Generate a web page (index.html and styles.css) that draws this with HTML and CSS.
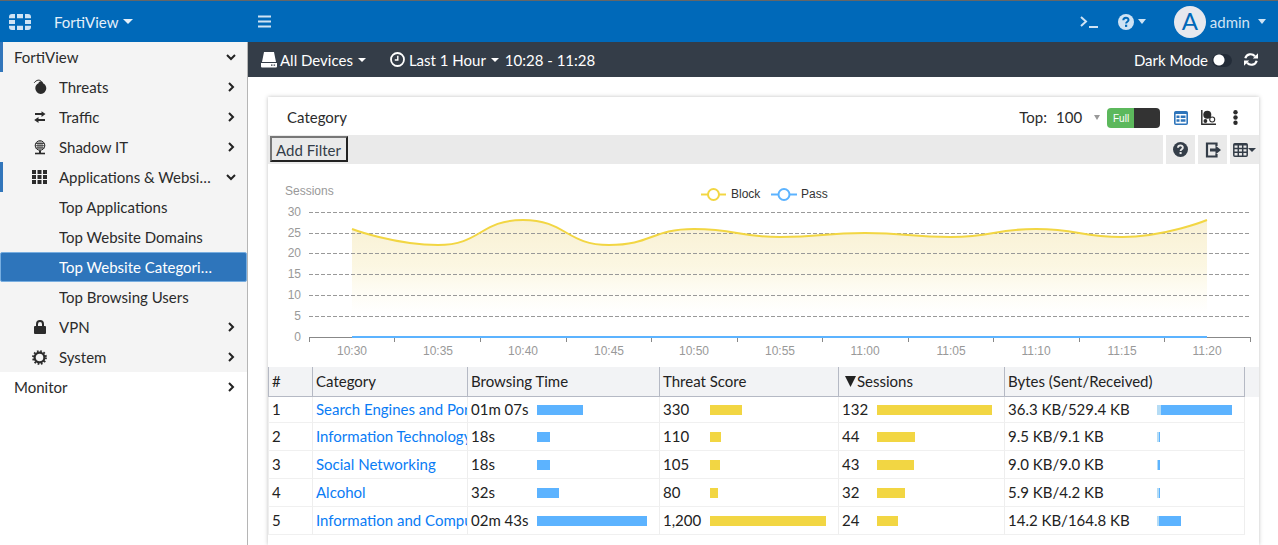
FILE: index.html
```html
<!DOCTYPE html>
<html lang="en">
<head>
<meta charset="utf-8">
<meta name="viewport" content="width=device-width, initial-scale=1">
<title>FortiView - Top Website Categories</title>
<link rel="stylesheet" href="styles.css">
</head>
<body>
<header class="topbar">
  <div class="brand">
    <svg class="logo" width="22" height="16" viewBox="0 0 22 16" fill="currentColor"><path d="M0 4.200V3a3 3 0 0 1 3-3h3v4.200zM8 0h6v4.200H8zM16 0h3a3 3 0 0 1 3 3v1.200h-6zM0 6h6v4H0zM16 6h6v4h-6zM0 11.800h6V16H3a3 3 0 0 1-3-3zM8 11.800h6V16H8zM16 11.800h6V13a3 3 0 0 1-3 3h-3z"/></svg>
    <button class="plain brand-name" type="button">FortiView <span class="caret"></span></button>
  </div>
  <button class="plain menu-toggle" type="button" aria-label="Toggle menu">
    <svg width="13" height="13" viewBox="0 0 13 13" stroke="currentColor" stroke-width="2"><path d="M0 1.500h13M0 6.500h13M0 11.500h13"/></svg>
  </button>
  <div class="top-actions">
    <button class="plain console" type="button" aria-label="Console">
      <svg width="18" height="14" viewBox="0 0 18 14" fill="none" stroke="currentColor" stroke-width="2"><path d="M1 2l5 4.500L1 11M9 12h9"/></svg>
    </button>
    <button class="plain help" type="button" aria-label="Help">
      <svg width="16" height="16" viewBox="0 0 16 16"><circle cx="8" cy="8" r="8" fill="currentColor"/><path d="M5.300 6.200C5.400 2.700 10.600 2.900 10.500 6c0 1.700-2.400 1.700-2.400 3.500" fill="none" stroke="#0069b9" stroke-width="2"/><path d="M7 10.700h2.200v2.200H7z" fill="#0069b9"/></svg>
      <span class="caret"></span>
    </button>
    <button class="plain user" type="button"><span class="avatar">A</span>admin <span class="caret"></span></button>
  </div>
</header>

<div class="shell">
  <nav class="sidebar">
    <div class="group">
      <a class="item root open" href="#"><span class="label">FortiView</span><svg class="chev" viewBox="0 0 10 10"><path d="M1 3l4 4 4-4"/></svg></a>
      <a class="item" href="#"><span class="icon"><svg width="14" height="16" viewBox="0 0 14 16"><path d="M8 2.200c1.500 0 2 1 2 2 2 .9 3.300 2.800 3.300 5A5.500 5.700 0 0 1 2.300 9.200c0-2.200 1.300-4 3.200-4.900 0-1 1-2.100 2.500-2.100z" fill="currentColor"/><path d="M8.500 2.500C6.500.3 3.500.8 1.200 3.800" fill="none" stroke="currentColor"/></svg></span><span class="label">Threats</span><svg class="chev" viewBox="0 0 10 10"><path d="M3 1l4 4-4 4"/></svg></a>
      <a class="item" href="#"><span class="icon"><svg width="12" height="12" viewBox="0 0 12 12" fill="currentColor"><path d="M1 2h6.500V.2L11.500 3 7.500 5.900V4.100H1zM11 10H4.500v1.900L.2 9l4.300-2.900v1.800H11z"/></svg></span><span class="label">Traffic</span><svg class="chev" viewBox="0 0 10 10"><path d="M3 1l4 4-4 4"/></svg></a>
      <a class="item" href="#"><span class="icon"><svg width="12" height="15" viewBox="0 0 12 15" fill="none" stroke="currentColor"><circle cx="6" cy="5.500" r="4.800"/><path d="M1.500 3.500h9M1 5.700h10M1.500 7.900h9M6 1v9M4 1.500v8M8 1.500v8" stroke-width=".8"/><path d="M6 10.500V13" stroke-width="2"/><path d="M1 13.500h10" stroke-width="1.600"/></svg></span><span class="label">Shadow IT</span><svg class="chev" viewBox="0 0 10 10"><path d="M3 1l4 4-4 4"/></svg></a>
      <a class="item open" href="#"><span class="icon"><svg width="15" height="14" viewBox="0 0 15 14" fill="currentColor"><path d="M0 0h4v4H0zM5.500 0h4v4h-4zM11 0h4v4h-4zM0 5h4v4H0zM5.500 5h4v4h-4zM11 5h4v4h-4zM0 10h4v4H0zM5.500 10h4v4h-4zM11 10h4v4h-4z"/></svg></span><span class="label">Applications &amp; Websites</span><svg class="chev" viewBox="0 0 10 10"><path d="M1 3l4 4 4-4"/></svg></a>
      <a class="item child" href="#"><span class="label">Top Applications</span></a>
      <a class="item child" href="#"><span class="label">Top Website Domains</span></a>
      <a class="item child selected" href="#" aria-current="page"><span class="label">Top Website Categories</span></a>
      <a class="item child" href="#"><span class="label">Top Browsing Users</span></a>
      <a class="item" href="#"><span class="icon"><svg width="12" height="14" viewBox="0 0 12 14"><rect y="6" width="12" height="8" rx="1" fill="currentColor"/><path d="M3 7V4.200a3 3.100 0 0 1 6 0V7" fill="none" stroke="currentColor" stroke-width="2"/></svg></span><span class="label">VPN</span><svg class="chev" viewBox="0 0 10 10"><path d="M3 1l4 4-4 4"/></svg></a>
      <a class="item" href="#"><span class="icon"><svg width="15" height="15" viewBox="0 0 15 15" fill="none" stroke="currentColor"><circle cx="7.500" cy="7.500" r="4.900" stroke-width="2.200"/><circle cx="7.500" cy="7.500" r="6.500" stroke-width="1.800" stroke-dasharray="1.700 1.700"/></svg></span><span class="label">System</span><svg class="chev" viewBox="0 0 10 10"><path d="M3 1l4 4-4 4"/></svg></a>
    </div>
    <a class="item root" href="#"><span class="label">Monitor</span><svg class="chev" viewBox="0 0 10 10"><path d="M3 1l4 4-4 4"/></svg></a>
  </nav>

  <main class="main">
    <div class="subbar">
      <button class="plain devices" type="button"><svg width="16" height="16" viewBox="0 0 16 16" fill="currentColor"><path d="M3 0h10l2 10H1zM0 11h16v3.500a1 1 0 0 1-1 1H1a1 1 0 0 1-1-1z"/><path d="M10 12.600h1.500v1.200H10zM12.600 12.600h1.500v1.200h-1.500z" fill="#343d48"/></svg>All Devices <span class="caret small"></span></button>
      <button class="plain period" type="button"><svg width="15" height="15" viewBox="0 0 15 15" fill="none" stroke="currentColor" stroke-width="1.800"><circle cx="7.500" cy="7.500" r="6.500"/><path d="M7.800 3.800V8H4.800" stroke-width="1.400"/></svg>Last 1 Hour <span class="caret small"></span></button>
      <span class="range">10:28 - 11:28</span>
      <label class="dark" for="dark-mode">Dark Mode <input id="dark-mode" class="knob" type="checkbox"></label>
      <button class="plain refresh" type="button" aria-label="Refresh"><svg width="14" height="13" viewBox="0 0 14 13"><path d="M1.300 5.300C2.600.8 8 0 11 3.200M12.700 7.700C11.400 12.200 6 13 3 9.800" fill="none" stroke="currentColor" stroke-width="2.200"/><path d="M14 .3v5.200H8.800zM0 12.700V7.500h5.200z" fill="currentColor"/></svg></button>
    </div>

    <section class="card">
      <div class="card-head">
        <h1 class="title">Category</h1>
        <label class="top-label" for="top-count">Top:</label>
        <span class="top-select"><select id="top-count"><option>100</option><option>50</option><option>20</option></select></span>
        <label class="full"><input type="checkbox" checked><span>Full</span></label>
        <button class="plain view-table" type="button" aria-label="Table view"><svg width="14" height="14" viewBox="0 0 14 14"><rect x=".8" y=".8" width="12.400" height="12.400" rx="1" fill="none" stroke="currentColor" stroke-width="1.600"/><path d="M1 1h12v2H1zM2.500 4.500h3V7h-3zM6.700 4.500h4.800V7H6.700zM2.500 8.300h3v2.500h-3zM6.700 8.300h4.800v2.500H6.700z" fill="currentColor"/></svg></button>
        <button class="plain view-bubble" type="button" aria-label="Bubble view"><svg width="15" height="15" viewBox="0 0 15 15"><path d="M.8 0v14.200H15" fill="none" stroke="currentColor" stroke-width="1.400"/><circle cx="6.300" cy="4.800" r="4" fill="currentColor"/><circle cx="4.400" cy="11" r="1.900" fill="currentColor"/><circle cx="11.200" cy="9.500" r="2.500" fill="none" stroke="currentColor" stroke-width="1.100"/></svg></button>
        <button class="plain more" type="button" aria-label="More"><svg width="5" height="15" viewBox="0 0 5 15" fill="currentColor"><circle cx="2.500" cy="2.300" r="2.200"/><circle cx="2.500" cy="7.500" r="2.200"/><circle cx="2.500" cy="12.700" r="2.200"/></svg></button>
      </div>

      <div class="toolbar">
        <div class="filter"><button class="add-filter" type="button">Add Filter</button></div>
        <button class="tool" type="button" aria-label="Help"><svg width="15" height="15" viewBox="0 0 16 16"><circle cx="8" cy="8" r="8" fill="currentColor"/><path d="M5.300 6.200C5.400 2.700 10.600 2.900 10.500 6c0 1.700-2.400 1.700-2.400 3.500" fill="none" stroke="#eaeaea" stroke-width="2"/><path d="M7 10.700h2.200v2.200H7z" fill="#eaeaea"/></svg></button>
        <button class="tool" type="button" aria-label="Export"><svg width="16" height="16" viewBox="0 0 16 16"><path d="M11.500 4V1.500H2v13h9.500V12" fill="none" stroke="currentColor" stroke-width="2.200"/><path d="M5 6.500h5.500v-3L16 8l-5.500 4.500v-3H5z" fill="currentColor"/></svg></button>
        <button class="tool" type="button" aria-label="Columns"><svg width="15" height="14" viewBox="0 0 15 14" fill="none" stroke="currentColor" stroke-width="1.500"><rect x=".8" y=".8" width="13.400" height="12.400" rx="1"/><path d="M1 1.800h13M1 5.500h13M1 9.300h13M5.300 1v12M9.700 1v12"/></svg><span class="caret small"></span></button>
      </div>

      <svg class="chart" viewBox="0 0 991 203" role="img" aria-label="Sessions over time">
        <defs><linearGradient id="fade" gradientUnits="userSpaceOnUse" x1="0" y1="56" x2="0" y2="150"><stop offset="0" stop-color="#e0bc38" stop-opacity=".22"/><stop offset=".5" stop-color="#e8c840" stop-opacity=".15"/><stop offset="1" stop-color="#f2e080" stop-opacity="0"/></linearGradient></defs>
        <path fill="url(#fade)" d="M84 65C84 65 127 81 170 81S212 56 255 56S298 81 341 81S383 65 426 65S469 73 512 73S554 69 597 69S640 73 683 73S725 65 768 65S811 73 854 73S939 56 939 56V173H84z"/>
        <g class="grid"><path d="M41 48.500h941M41 69.500h941M41 89.500h941M41 110.500h941M41 131.500h941M41 152.500h941"/></g>
        <path class="axis" d="M41 173.500h941M41.500 173v5M126.500 173v5M212.500 173v5M298.500 173v5M383.500 173v5M469.500 173v5M554.500 173v5M640.500 173v5M725.500 173v5M811.500 173v5M896.500 173v5M982.500 173v5"/>
        <path class="line block" d="M84 65C84 65 127 81 170 81S212 56 255 56S298 81 341 81S383 65 426 65S469 73 512 73S554 69 597 69S640 73 683 73S725 65 768 65S811 73 854 73S939 56 939 56"/>
        <path class="line pass" d="M84 173h855"/>
        <text x="17" y="31">Sessions</text>
        <g class="ylabels"><text x="33" y="52">30</text><text x="33" y="73">25</text><text x="33" y="93">20</text><text x="33" y="114">15</text><text x="33" y="135">10</text><text x="33" y="156">5</text><text x="33" y="177">0</text></g>
        <g class="xlabels"><text x="84" y="191">10:30</text><text x="170" y="191">10:35</text><text x="255" y="191">10:40</text><text x="341" y="191">10:45</text><text x="426" y="191">10:50</text><text x="512" y="191">10:55</text><text x="597" y="191">11:00</text><text x="683" y="191">11:05</text><text x="768" y="191">11:10</text><text x="854" y="191">11:15</text><text x="939" y="191">11:20</text></g>
        <g class="legend"><path class="line block" d="M433 30.500h25"/><circle class="dot block" cx="445.500" cy="30.500" r="5.500"/><text x="463" y="34">Block</text><path class="line pass" d="M503 30.500h26"/><circle class="dot pass" cx="516" cy="30.500" r="5.500"/><text x="533" y="34">Pass</text></g>
      </svg>

      <table class="data">
        <colgroup><col class="c-num"><col class="c-cat"><col class="c-time"><col class="c-threat"><col class="c-sess"><col><col class="c-end"></colgroup>
        <thead><tr><th>#</th><th>Category</th><th>Browsing Time</th><th>Threat Score</th><th><svg class="sort" viewBox="0 0 11 11"><path d="M0 0h11L5.500 11z"/></svg>Sessions</th><th>Bytes (Sent/Received)</th><td></td></tr></thead>
        <tbody>
          <tr><td>1</td><td><a href="#">Search Engines and Portals</a></td><td><div class="metric time"><span>01m 07s</span><i><b style="width:42%"></b></i></div></td><td><div class="metric threat"><span>330</span><i><b style="width:27.5%"></b></i></div></td><td><div class="metric sess"><span>132</span><i><b style="width:100%"></b></i></div></td><td><div class="metric bytes"><span>36.3 KB/529.4 KB</span><i><b class="sent" style="width:5.4%"></b><b style="width:94.6%"></b></i></div></td><td></td></tr>
          <tr><td>2</td><td><a href="#">Information Technology</a></td><td><div class="metric time"><span>18s</span><i><b style="width:12%"></b></i></div></td><td><div class="metric threat"><span>110</span><i><b style="width:9.2%"></b></i></div></td><td><div class="metric sess"><span>44</span><i><b style="width:33.3%"></b></i></div></td><td><div class="metric bytes"><span>9.5 KB/9.1 KB</span><i><b class="sent" style="width:2.7%"></b><b style="width:1.4%"></b></i></div></td><td></td></tr>
          <tr><td>3</td><td><a href="#">Social Networking</a></td><td><div class="metric time"><span>18s</span><i><b style="width:12%"></b></i></div></td><td><div class="metric threat"><span>105</span><i><b style="width:8.8%"></b></i></div></td><td><div class="metric sess"><span>43</span><i><b style="width:32.6%"></b></i></div></td><td><div class="metric bytes"><span>9.0 KB/9.0 KB</span><i><b class="sent" style="width:1.4%"></b><b style="width:2.7%"></b></i></div></td><td></td></tr>
          <tr><td>4</td><td><a href="#">Alcohol</a></td><td><div class="metric time"><span>32s</span><i><b style="width:20%"></b></i></div></td><td><div class="metric threat"><span>80</span><i><b style="width:6.7%"></b></i></div></td><td><div class="metric sess"><span>32</span><i><b style="width:24.2%"></b></i></div></td><td><div class="metric bytes"><span>5.9 KB/4.2 KB</span><i><b class="sent" style="width:2.7%"></b><b style="width:1.4%"></b></i></div></td><td></td></tr>
          <tr><td>5</td><td><a href="#">Information and Computer Security</a></td><td><div class="metric time"><span>02m 43s</span><i><b style="width:100%"></b></i></div></td><td><div class="metric threat"><span>1,200</span><i><b style="width:100%"></b></i></div></td><td><div class="metric sess"><span>24</span><i><b style="width:18.2%"></b></i></div></td><td><div class="metric bytes"><span>14.2 KB/164.8 KB</span><i><b class="sent" style="width:2.7%"></b><b style="width:29.3%"></b></i></div></td><td></td></tr>
        </tbody>
      </table>
    </section>
  </main>
</div>
</body>
</html>
```
FILE: styles.css
```css
* { box-sizing: border-box; }
body {
  margin: 0;
  min-height: 100vh;
  display: flex;
  flex-direction: column;
  font: 15px/20px Lato, "Liberation Sans", sans-serif;
  color: #2b2b2b;
  background: #fff;
}
svg { flex: none; display: block; }
a { color: inherit; text-decoration: none; }
.plain {
  border: 0;
  padding: 0;
  background: none;
  font: inherit;
  color: inherit;
  display: flex;
  align-items: center;
}
.caret {
  border: 5px solid transparent;
  border-top-color: currentColor;
  border-bottom: 0;
  margin-left: 5px;
}
.caret.small { border-width: 4px 4px 0; }

/* top bar */
.topbar {
  display: flex;
  align-items: center;
  height: 42px;
  border-top: 1px solid #666;
  background: #0069b9;
  color: #cfe3f4;
}
.brand { width: 248px; padding-left: 9px; display: flex; align-items: center; }
.brand-name { margin-left: 23px; color: #e4f0fa; }
.menu-toggle { margin-left: 10px; }
.top-actions { margin-left: auto; display: flex; align-items: center; padding-right: 12px; }
.help { margin-left: 20px; }
.help .caret { margin-left: 4px; border-width: 5px 4px 0; }
.user { margin-left: 28px; }
.user .caret { margin-left: 8px; border-width: 5px 4px 0; }
.avatar {
  width: 32px;
  height: 32px;
  margin-right: 4px;
  border-radius: 50%;
  background: #e6e8ee;
  color: #0069b9;
  font-size: 24px;
  line-height: 30px;
  text-align: center;
}

/* sidebar */
.shell { flex: 1; display: flex; }
.sidebar { width: 248px; flex: none; border-right: 1px solid #b5b5b5; }
.group { background: #f4f4f4; }
.item {
  display: flex;
  align-items: center;
  height: 30px;
  padding: 0 11px 0 29px;
  border-left: 3px solid transparent;
}
.item.root { padding-left: 11px; }
.item.open { border-left-color: #3276bb; }
.item.child { padding-left: 56px; }
.item .icon { width: 15px; margin-right: 12px; display: flex; justify-content: center; }
.label { width: 154px; overflow: hidden; white-space: nowrap; text-overflow: ellipsis; }
.item.selected {
  padding-left: 58px;
  border: 1px solid #78aee0;
  border-radius: 2px;
  background: #2e75bb;
  color: #fff;
}
.chev {
  width: 10px;
  height: 10px;
  margin-left: auto;
  fill: none;
  stroke: #222;
  stroke-width: 2;
}

/* content header */
.main { flex: 1; min-width: 0; }
.subbar {
  display: flex;
  align-items: center;
  height: 35px;
  padding: 0 20px 0 13px;
  background: #343d48;
  color: #fff;
}
.devices svg { margin-right: 3px; }
.period { margin-left: 24px; }
.period svg { margin-right: 4px; }
.range { margin-left: 6px; }
.dark { margin-left: auto; display: flex; align-items: center; }
.knob {
  appearance: none;
  width: 20px;
  height: 13px;
  margin: 2px 12px 0 4px;
  border-radius: 7px;
  background: radial-gradient(circle at 7px 6px, #fff 5px, #232c38 6px);
}

/* card */
.card {
  margin: 20px 19px 0 20px;
  min-height: 448px;
  background: #fff;
  box-shadow: 0 0 4px rgba(0, 0, 0, .25);
}
.card-head { display: flex; align-items: center; height: 38px; padding: 3px 21px 0 19px; }
.title { margin: 0 auto 0 0; padding-bottom: 2px; font: inherit; }
.top-label { padding-bottom: 2px; }
.top-select { display: flex; align-items: center; margin: 0 7px 0 9px; }
.top-select select {
  appearance: none;
  width: 38px;
  border: 0;
  padding: 0 0 2px;
  background: none;
  font: inherit;
  color: inherit;
}
.top-select::after {
  content: "";
  border: 3px solid transparent;
  border-top: 5px solid #999;
  border-bottom: 0;
}
.full {
  position: relative;
  width: 53px;
  height: 20px;
  border-radius: 4px;
  background: linear-gradient(90deg, #5cb85c 27px, #333 27px);
  color: #fff;
  font: 10px/22px "Liberation Sans", sans-serif;
}
.full span { padding-left: 6px; }
.full input { appearance: none; position: absolute; inset: 0; margin: 0; }
.view-table { margin-left: 14px; color: #2e75bb; }
.view-bubble { margin-left: 13px; }
.more { margin-left: 17px; }

.toolbar { display: flex; gap: 3px; height: 29px; color: #343d48; }
.filter { flex: 1; padding: 1px 2px; background: #eaeaea; }
.add-filter {
  height: 26px;
  padding: 2px 5px 0 4px;
  border: 2px solid;
  border-color: #777 #222 #222 #777;
  background: #eaeaea;
  font: inherit;
  color: #343d48;
}
.tool {
  width: 29px;
  padding: 0;
  border: 0;
  background: #eaeaea;
  color: inherit;
  display: flex;
  align-items: center;
  justify-content: center;
}
.tool .caret { margin-left: 0; }

/* chart */
.chart { width: 100%; height: auto; }
.chart text { font: 12px "Liberation Sans", sans-serif; fill: #999; }
.chart .legend text { fill: #333; }
.ylabels { text-anchor: end; }
.xlabels { text-anchor: middle; }
.grid { stroke: #999; stroke-dasharray: 4 2; }
.axis { fill: none; stroke: #888; }
.line { fill: none; stroke-width: 2; }
.dot { fill: #fff; stroke-width: 2; }
.block { stroke: #f2d643; }
.pass { stroke: #5cb3ff; }

/* table */
.data { width: 100%; table-layout: fixed; border-spacing: 0; color: #222; }
.c-num { width: 45px; }
.c-cat { width: 155px; }
.c-time { width: 192px; }
.c-threat { width: 179px; }
.c-sess { width: 166px; }
.c-end { width: 14px; }
.data th {
  height: 30px;
  padding: 0 3px 2px;
  border-right: 1px solid #b5b9c4;
  border-bottom: 1px solid #b5b9c4;
  background: #f2f3f5;
  font-weight: 400;
  text-align: left;
  white-space: nowrap;
}
.data th:first-child { border-left: 1px solid #b5b9c4; }
.data thead td { background: #f2f3f5; }
.data tbody td {
  height: 28px;
  padding: 0 0 2px 3px;
  border-right: 1px solid #eee;
  border-bottom: 1px solid #f0f0f0;
  overflow: hidden;
  white-space: nowrap;
}
.data tbody tr:first-child td { height: 26px; }
.data tbody td:first-child { border-left: 1px solid #eee; }
.data tbody td:last-child { border: 0; }
.data a { color: #0a7cf5; }
.sort { display: inline-block; width: 11px; height: 11px; margin: 0 1px 0 3px; fill: #222; }
.metric { display: grid; align-items: center; padding-right: 12px; }
.time { grid-template-columns: 66px 1fr; }
.threat { grid-template-columns: 47px 1fr; }
.sess { grid-template-columns: 35px 1fr; }
.bytes { grid-template-columns: 149px 1fr; }
.metric i { display: flex; height: 12px; padding-top: 2px; }
.metric b { background: #5cb3ff; }
.threat b, .sess b { background: #f2d643; }
.metric .sent { background: #b5dcf5; }
```
